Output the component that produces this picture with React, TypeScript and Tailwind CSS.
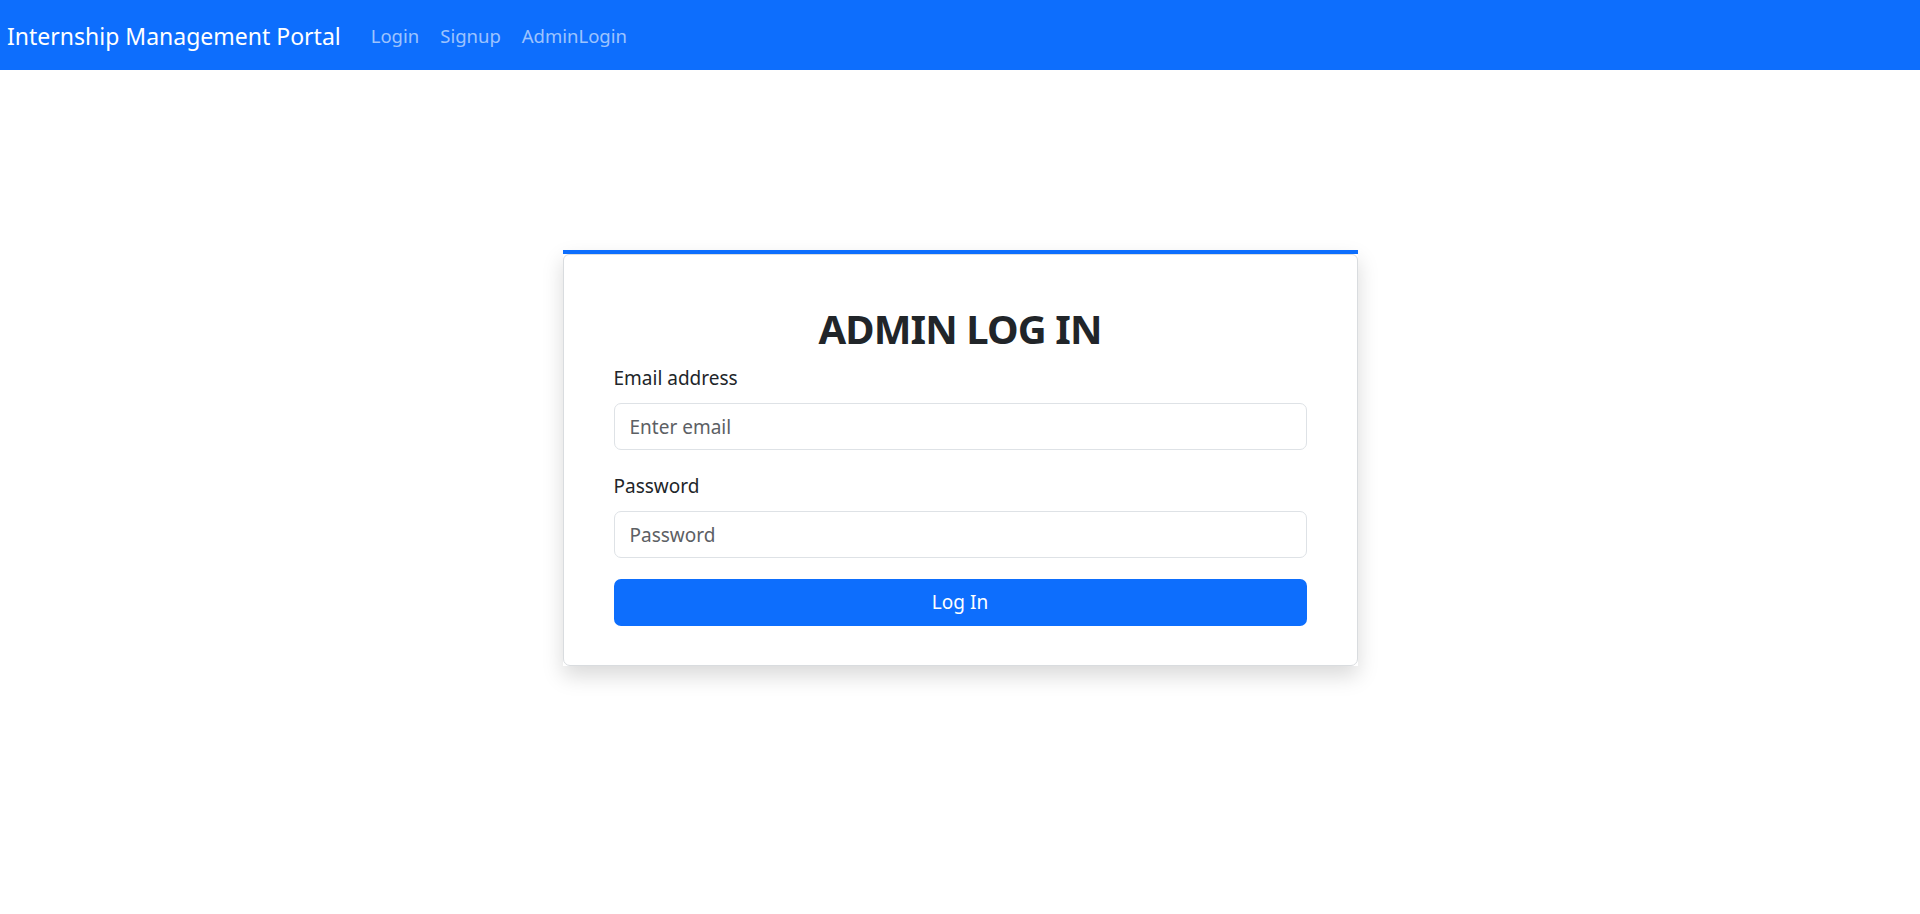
import React from 'react';

const font = { fontFamily: '"Noto Sans", "Open Sans", sans-serif' };

const Navbar = () => (
  <nav className="flex h-[70px] items-center bg-[#0d6efd] px-[7px] pt-[2px]">
    <a className="mr-[30px] text-[23px] leading-none text-white">Internship Management Portal</a>
    <div className="flex gap-[21px] text-[18.5px] text-white/60">
      <a>Login</a>
      <a>Signup</a>
      <a>AdminLogin</a>
    </div>
  </nav>
);

const Field = ({ label, type, placeholder }: { label: string; type: string; placeholder: string }) => (
  <div className="mb-[21px] flex flex-col">
    <label className="mb-[10px] text-[19px] leading-[30px] text-[#212529]">{label}</label>
    <input
      type={type}
      placeholder={placeholder}
      className="h-[47px] rounded-[7px] border border-[#dee2e6] px-[15px] text-[19px] text-[#212529] outline-none placeholder:text-[#5c6064]"
    />
  </div>
);

export default function App() {
  return (
    <div className="min-h-[914px] bg-white" style={font}>
      <Navbar />
      <main className="flex justify-center pt-[180px]">
        <div className="w-[795px] border-t-4 border-[#0d6efd] shadow-[0_10px_20px_rgba(0,0,0,0.15)]">
          <div className="rounded-b-[7px] rounded-t-[6px] border border-[#d9dcdf] bg-white px-[50px] pb-[39px] pt-[50px]">
            <h1 className="mb-[10px] text-center text-[40px] font-bold leading-[1.2] tracking-[-0.9px] text-[#212529]">ADMIN LOG IN</h1>
            <Field label="Email address" type="email" placeholder="Enter email" />
            <Field label="Password" type="password" placeholder="Password" />
            <button className="h-[47px] w-full rounded-[7px] bg-[#0d6efd] text-[19px] text-white">Log In</button>
          </div>
        </div>
      </main>
    </div>
  );
}
